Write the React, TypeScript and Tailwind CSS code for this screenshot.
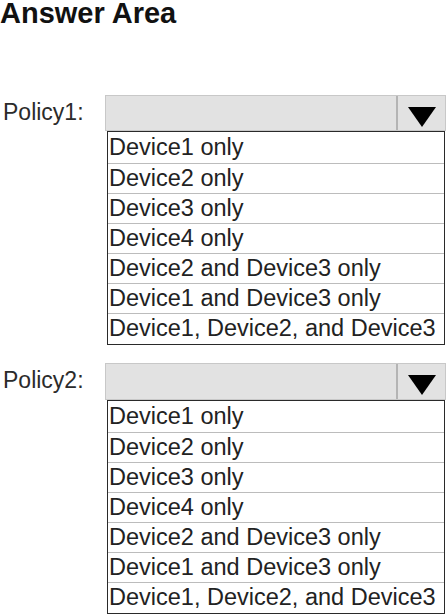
const options = [
  "Device1 only",
  "Device2 only",
  "Device3 only",
  "Device4 only",
  "Device2 and Device3 only",
  "Device1 and Device3 only",
  "Device1, Device2, and Device3",
];

function PolicyRow({ label, boxHeight }: { label: string; boxHeight: string }) {
  return (
    <div className="flex items-start">
      <div className="w-[105px] shrink-0 pl-[3px] pt-[2px] text-[23px] leading-[30px] text-[#2b2b2b]">
        {label}
      </div>
      <div className="flex w-[341px] flex-col">
        <div className={`flex ${boxHeight} border border-[#c8c8c8] bg-[#e2e2e2]`}>
          <div className="flex-1" />
          <div className="flex w-[49px] items-start justify-center border-l-2 border-[#b4b4b4] pt-[11px]">
            <svg width="28" height="20" viewBox="0 0 28 20" aria-hidden="true">
              <polygon points="0,0 28,0 14,20" fill="#000" />
            </svg>
          </div>
        </div>
        <ul className="ml-[2px] w-[338px] border border-[#2a2a2a] bg-white">
          {options.map((option, index) => (
            <li
              key={option}
              className={
                index === 0
                  ? "h-[31px] whitespace-nowrap pl-[1px] text-[23.5px] leading-[30px] text-[#222]"
                  : index === options.length - 1
                    ? "h-[31px] whitespace-nowrap border-t border-[#bcbcbc] pl-[1px] text-[23.5px] leading-[29px] text-[#222]"
                    : "h-[30px] whitespace-nowrap border-t border-[#bcbcbc] pl-[1px] text-[23.5px] leading-[29px] text-[#222]"
              }
            >
              {option}
            </li>
          ))}
        </ul>
      </div>
    </div>
  );
}

export default function App() {
  return (
    <div className="h-[615px] w-[447px] overflow-hidden bg-white font-['Liberation_Sans',Arial,sans-serif]">
      <h1 className="text-[29px] font-bold leading-[26px] text-[#111]">Answer Area</h1>
      <div className="mt-[69px] flex flex-col gap-[18px]">
        <PolicyRow label="Policy1:" boxHeight="h-[36px]" />
        <PolicyRow label="Policy2:" boxHeight="h-[37px]" />
      </div>
    </div>
  );
}
